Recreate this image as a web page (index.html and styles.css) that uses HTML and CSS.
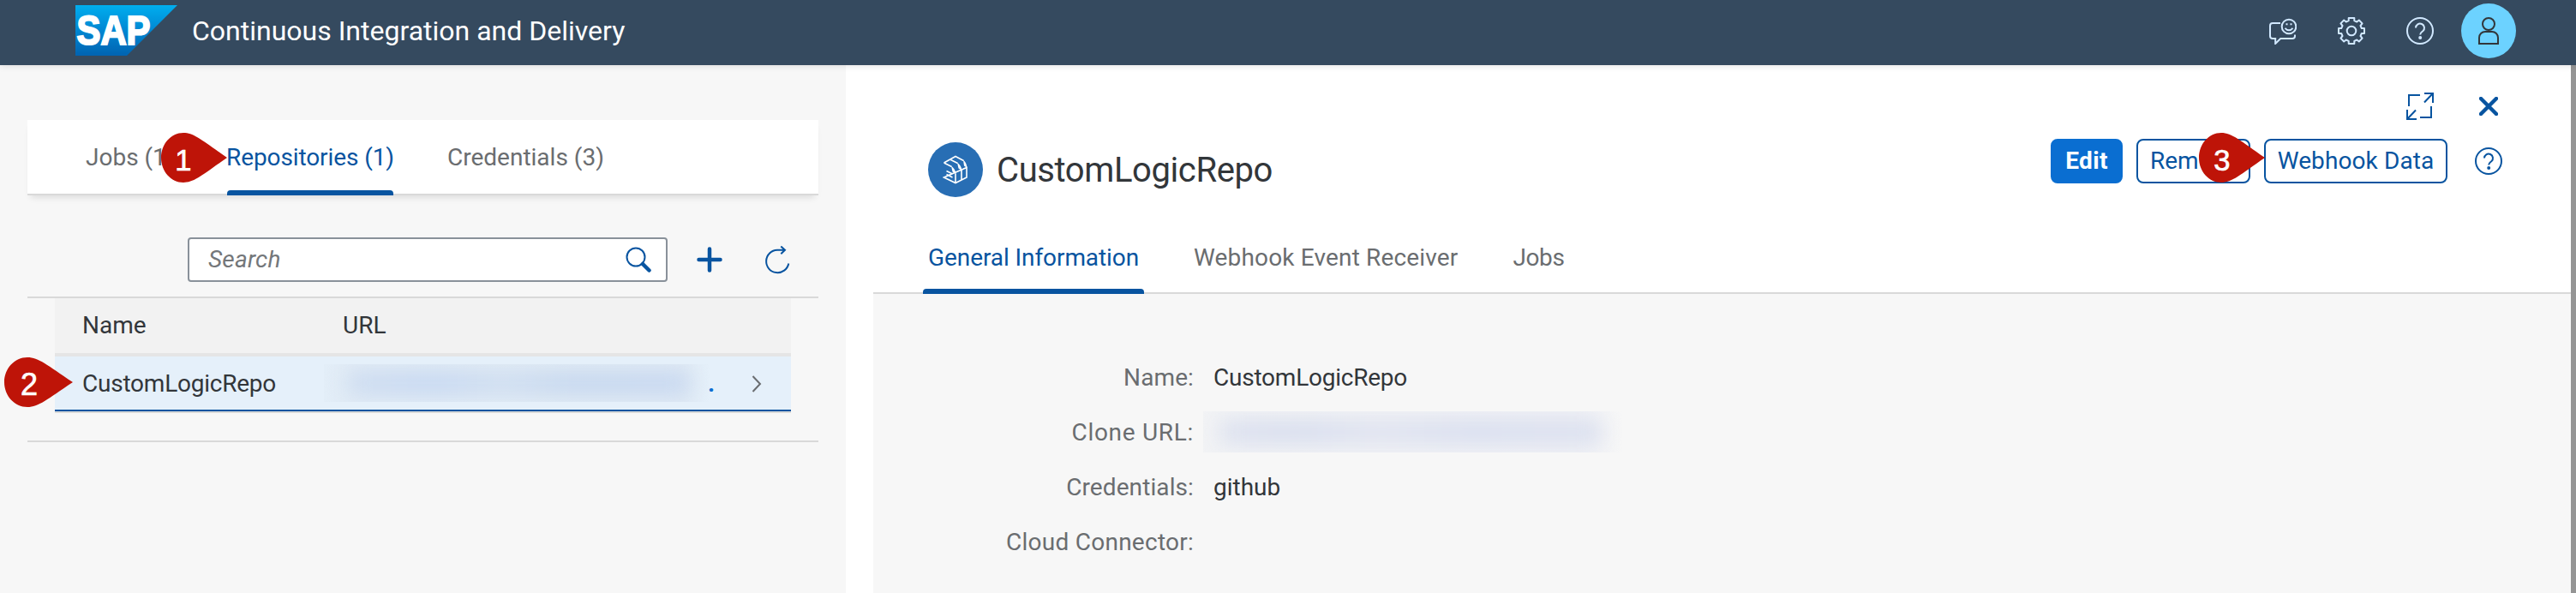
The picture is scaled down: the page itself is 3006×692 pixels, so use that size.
FILE: index.html
```html
<!DOCTYPE html>
<html lang="en">
<head>
<meta charset="utf-8">
<title>Continuous Integration and Delivery</title>
<link rel="stylesheet" href="styles.css">
</head>
<body>
<header class="shell">
  <svg class="logo" width="119" height="59" viewBox="0 0 119 59">
    <defs><linearGradient id="sap" x1="0" y1="0" x2="0" y2="1"><stop offset="0" stop-color="#00aeef"/><stop offset=".5" stop-color="#0087d2"/><stop offset="1" stop-color="#0063b1"/></linearGradient></defs>
    <path d="M0 0H119L60 59H0Z" fill="url(#sap)"/>
    <text class="logo-text" x="1.5" y="46.200" textLength="86" lengthAdjust="spacingAndGlyphs">SAP</text>
  </svg>
  <h1 class="shell-title">Continuous Integration and Delivery</h1>
  <div class="shell-actions">
    <svg class="shell-icon" viewBox="0 0 32 32">
      <path d="M13 7H4a3 3 0 0 0-3 3v12a3 3 0 0 0 3 3h3.200v6l6-6H27a3 3 0 0 0 3-3v-1.500"/>
      <circle cx="23" cy="11" r="8.300"/><path d="M18.500 12.800q4.500 5 9 0"/>
      <path d="M20.500 7.200v2M25.500 7.200v2"/>
    </svg>
    <svg class="shell-icon" viewBox="0 0 32 32">
      <path stroke-linejoin="round" d="M12.700 1h6.600v3.200l3 1.300 2.500-2 3.800 3.900-2.100 2.600 1.300 3H31v6h-3.200l-1.300 3 2.100 2.600-3.800 3.900-2.500-2-3 1.300V31h-6.600v-3.200l-3-1.300-2.500 2-3.800-3.900 2.100-2.600-1.300-3H1v-6h3.200l1.300-3-2.100-2.600 3.800-3.900 2.500 2 3-1.300Z"/>
      <circle cx="16" cy="16" r="5.300"/>
    </svg>
    <svg class="shell-icon" viewBox="0 0 32 32">
      <circle cx="16" cy="16" r="15"/><path d="M11 12.500a5 5 0 1 1 8.300 3.800c-2 1.600-3.100 2-3.100 4.200"/><circle class="dot" cx="16.200" cy="24" r="2"/>
    </svg>
    <div class="avatar">
      <svg class="user-icon" width="26" height="32" viewBox="0 0 26 32"><circle cx="13" cy="8" r="7"/><path d="M2 31V24a7 7 0 0 1 7-7h8a7 7 0 0 1 7 7v7Z"/></svg>
    </div>
  </div>
</header>

<main class="columns">
  <section class="list">
    <nav class="list-tabs">
      <a class="tab tab-jobs"><span>Jobs (1)</span></a>
      <a class="tab tab-repos active"><span>Repositories (1)</span></a>
      <a class="tab tab-creds"><span>Credentials (3)</span></a>
    </nav>
    <div class="toolbar">
      <div class="search">
        <span>Search</span>
        <svg width="30" height="30" viewBox="0 0 30 30"><circle cx="12" cy="12" r="10.500"/><path class="handle" d="m20 20 7.500 7.500"/></svg>
      </div>
      <svg class="add" width="30" height="30" viewBox="0 0 30 30"><path d="M15 2.500v25M2.500 15h25"/></svg>
      <svg class="refresh" width="30" height="34" viewBox="0 0 30 34"><path d="M28.300 21.500A13.200 13.200 0 1 1 15 5.800h9M19.300 1.500l4.700 4.300-4.700 4.500"/></svg>
    </div>
    <div class="table-area">
      <div class="row head"><span class="name">Name</span><span>URL</span></div>
      <div class="row item">
        <span class="name">CustomLogicRepo</span>
        <span class="hidden-url"><i></i></span><span class="link">.</span>
        <svg class="chevron" width="12" height="20" viewBox="0 0 12 20"><path d="m1.500 1 8.500 9-8.500 9"/></svg>
      </div>
    </div>
  </section>

  <section class="detail">
    <div class="window-actions">
      <svg width="32" height="32" viewBox="0 0 32 32"><path d="M3 16V3h13M21 1h10v11M30.500 1.500 21 11.500M29 16v13H16M1 20v11h11M1.500 30.500l9.500-10"/></svg>
      <svg class="close" width="22" height="22" viewBox="0 0 22 22"><path d="m2 2 18 18M20 2 2 20"/></svg>
    </div>
    <div class="detail-head">
      <div class="repo-badge">
        <svg width="30" height="34" viewBox="0 0 30 34"><path d="M1.500 9 15 1.500l9.500 5M28 14.500V26L15 32.500 1.500 26ZM1.500 9l9 4.500M15 21.500v11M8.500 5l9 4.500M22 17.500v11.500M4.500 18.500l7 3.500M4.500 22.500l7 3.500"/><path class="ear" d="M10 12.800c2.500 1.500 5 4.500 5.500 9.200l-4-2.500ZM17 8.800c2.500 1.500 5 4.500 5.500 9.200l-4-2.500ZM24 5.800c2.500 1.500 4 4.500 4.500 9.200l-3.500-2.500Z"/></svg>
      </div>
      <h2>CustomLogicRepo</h2>
      <div class="buttons">
        <button class="btn primary">Edit</button>
        <button class="btn remove">Remove</button>
        <button class="btn webhook">Webhook Data</button>
        <svg class="help" width="32" height="32" viewBox="0 0 32 32"><circle cx="16" cy="16" r="15"/><path d="M11 12.500a5 5 0 1 1 8.300 3.800c-2 1.600-3.100 2-3.100 4.200"/><circle class="dot" cx="16.200" cy="24" r="2"/></svg>
      </div>
    </div>
    <nav class="detail-tabs">
      <a class="tab active">General Information</a>
      <a class="tab receiver">Webhook Event Receiver</a>
      <a class="tab jobs">Jobs</a>
    </nav>
    <dl class="info">
      <dt>Name:</dt><dd class="repo">CustomLogicRepo</dd>
      <dt class="clone">Clone URL:</dt><dd class="hidden-clone"><i></i></dd>
      <dt>Credentials:</dt><dd>github</dd>
      <dt class="wide">Cloud Connector:</dt><dd></dd>
    </dl>
  </section>
  <div class="scrollbar"></div>
</main>

<svg class="marker marker-1" width="77" height="58" viewBox="0 0 80 58" preserveAspectRatio="none"><path d="M27 0C40 0 50 9 80 29 50 49 40 58 27 58 12 58 0 45 0 29S12 0 27 0Z"/><text x="27" y="44">1</text></svg>
<svg class="marker marker-2" width="80" height="58" viewBox="0 0 80 58"><path d="M27 0C40 0 50 9 80 29 50 49 40 58 27 58 12 58 0 45 0 29S12 0 27 0Z"/><text x="29" y="44">2</text></svg>
<svg class="marker marker-3" width="77" height="58" viewBox="0 0 80 58" preserveAspectRatio="none"><path d="M27 0C40 0 50 9 80 29 50 49 40 58 27 58 12 58 0 45 0 29S12 0 27 0Z"/><text x="28" y="44">3</text></svg>
</body>
</html>
```
FILE: styles.css
```css
* { box-sizing: border-box; }
body { margin: 0; height: 692px; display: flex; flex-direction: column; overflow: hidden; position: relative; background: #fff; color: #32363a; font: 28px/36px Roboto, "Liberation Sans", sans-serif; }
h1, h2, dl, dd { margin: 0; font-weight: 400; }
svg { display: block; flex: none; fill: none; stroke: #0854a0; stroke-width: 2; }
span, a, h1, h2, dt, dd, button { white-space: nowrap; }

.shell { flex: none; height: 76px; padding: 0 70px 4px 88px; display: flex; align-items: center; background: #354a5f; color: #fff; position: relative; z-index: 1; box-shadow: 0 0 8px rgba(50, 54, 58, .18); }
.logo { stroke: none; margin-top: -2px; }
.logo-text { fill: #fff; stroke: #fff; stroke-width: 2.2px; font: bold 48px "Liberation Sans", sans-serif; }
.shell-title { font-size: 32px; margin-left: 17px; }
.shell-actions { margin-left: auto; display: flex; align-items: center; gap: 48px; }
.shell-icon { width: 32px; height: 32px; stroke: #d1e8ff; }
.dot { stroke: none; fill: #0854a0; }
.shell-icon .dot { fill: #d1e8ff; }
.avatar { width: 64px; height: 64px; margin-left: -16px; border-radius: 50%; background: #6cd2ff; display: grid; place-items: center; }
.user-icon { stroke: #32363a; }

.columns { flex: 1; display: flex; min-height: 0; }
.list { width: 987px; flex: none; background: #f7f7f7; padding: 64px 32px 0; }
.list-tabs { height: 88px; padding-left: 68px; display: flex; gap: 64px; background: #fff; border-bottom: 2px solid #d9d9d9; box-shadow: 0 6px 8px -4px rgba(0, 0, 0, .12); }
.tab { position: relative; color: #6a6d70; }
.list-tabs .tab { height: 88px; line-height: 88px; }
.tab-jobs { width: 101px; }
.tab-repos { width: 194px; letter-spacing: -.1px; }
.tab-repos span { margin-left: -1px; }
.tab-creds span { margin-left: -1px; }
.tab.active { color: #0854a0; }
.tab.active::after { content: ""; position: absolute; left: 0; right: 0; bottom: 0; height: 6px; border-radius: 4px 4px 0 0; background: #0854a0; }

.toolbar { height: 118px; padding: 49px 32px 0 187px; display: flex; align-items: flex-start; }
.search { width: 560px; height: 52px; padding: 0 17px 0 22px; display: flex; align-items: center; justify-content: space-between; background: #fff; border: 2px solid #89919a; border-radius: 4px; color: #74777a; font-style: italic; letter-spacing: .2px; }
.handle { stroke-width: 4.5px; stroke-linecap: round; }
.add { margin: 11px 0 0 34px; stroke-width: 4.5px; stroke-linecap: round; }
.refresh { margin: 9px 0 0 49px; }

.table-area { width: 923px; height: 170px; border: solid #d9d9d9; border-width: 2px 0; padding: 0 32px; }
.row { display: flex; align-items: center; padding-left: 32px; }
.head { height: 68px; background: #f2f2f2; border-bottom: 4px solid #e5e5e5; }
.item { height: 64px; background: #e5f0fa; border-bottom: 2px solid #0854a0; box-shadow: 0 2px #d9d9d9; letter-spacing: -.23px; padding-top: 1px; }
.name { width: 304px; }
.hidden-url { width: 450px; height: 44px; margin: -1px 0 0 -22px; overflow: hidden; background: linear-gradient(90deg, #e3eef8, #e1ebf5 8%, #e0eaf4 93%, #e5f0fa); }
.hidden-url i, .hidden-clone i { display: block; filter: blur(12px); }
.hidden-url i { height: 24px; margin: 10px 24px 0 28px; background: linear-gradient(90deg, #ccdbf0, #c4d6f1 25%, #ceddf0 45%, #c4d6ef 65%, #c5d6f0); }
.link { color: #0a6ed1; margin-left: -2px; font-weight: 700; }
.chevron { margin-left: 43px; stroke: #6a6d70; }

.detail { flex: 1; padding: 32px 0 0 32px; display: flex; flex-direction: column; }
.window-actions { height: 32px; padding-right: 85px; display: flex; justify-content: flex-end; align-items: center; gap: 53px; }
.close { stroke-width: 4.5px; stroke-linecap: round; }
.detail-head { height: 140px; padding: 22px 80px 0 64px; display: flex; align-items: flex-start; }
.repo-badge { width: 64px; height: 64px; margin-top: 4px; border-radius: 50%; background: #286eb4; display: grid; place-items: center; }
.repo-badge svg { stroke: #fff; stroke-width: 1.6px; }
.repo-badge .ear { fill: #fff; stroke: none; }
h2 { font-size: 40px; line-height: 66px; margin: 4px 0 0 16px; letter-spacing: -.4px; }
.buttons { margin-left: auto; display: flex; align-items: center; }
.btn { height: 52px; margin: 0 16px 0 0; padding: 0; border: 2px solid #0854a0; border-radius: 8px; background: #fff; color: #0854a0; font: inherit; }
.primary { width: 84px; background: #0a6ed1; border-color: #0a6ed1; color: #fff; font-weight: 700; letter-spacing: .3px; }
.remove { width: 133px; text-align: left; padding-left: 14px; }
.webhook { width: 214px; margin-right: 32px; letter-spacing: .1px; }
.detail-tabs { height: 63px; padding-left: 58px; display: flex; border-bottom: 2px solid #d9d9d9; gap: 52px; }
.detail-tabs .tab { height: 63px; padding: 0 6px; line-height: 42px; }
.detail-tabs .active { width: 258px; letter-spacing: -.08px; }
.detail-tabs .receiver { letter-spacing: .16px; }
.detail-tabs .jobs { letter-spacing: -.4px; }
.info { flex: 1; background: #f7f7f7; padding-top: 65px; display: grid; grid-template-columns: 374px 1fr; grid-auto-rows: 64px; align-content: start; line-height: 66px; column-gap: 23px; }
dt { text-align: right; color: #6a6d70; letter-spacing: .1px; }
.wide { letter-spacing: .25px; }
.clone { letter-spacing: .7px; }
.repo { letter-spacing: -.23px; }
.hidden-clone { width: 490px; height: 48px; margin: 8px 0 0 -12px; overflow: hidden; background: linear-gradient(90deg, #f2f3f5, #f0f1f5 90%, #f7f7f7); }
.hidden-clone i { height: 28px; margin: 10px 25px 0 20px; background: linear-gradient(90deg, #dce1ef, #d7ddee 20%, #dfe3f0 42%, #d8deef 65%, #dbe0ef); }
.scrollbar { width: 6px; flex: none; background: #959595; }

/* Numbered callouts float over the controls they point at */
.marker { position: absolute; z-index: 2; stroke: none; fill: #be1408; }
.marker text { fill: #fff; stroke: #fff; stroke-width: .7px; font: 36px "Liberation Sans", sans-serif; text-anchor: middle; }
.marker-1 { left: 187.5px; top: 155px; }
.marker-2 { left: 5px; top: 417px; }
.marker-3 { left: 2565.5px; top: 155px; }
```
